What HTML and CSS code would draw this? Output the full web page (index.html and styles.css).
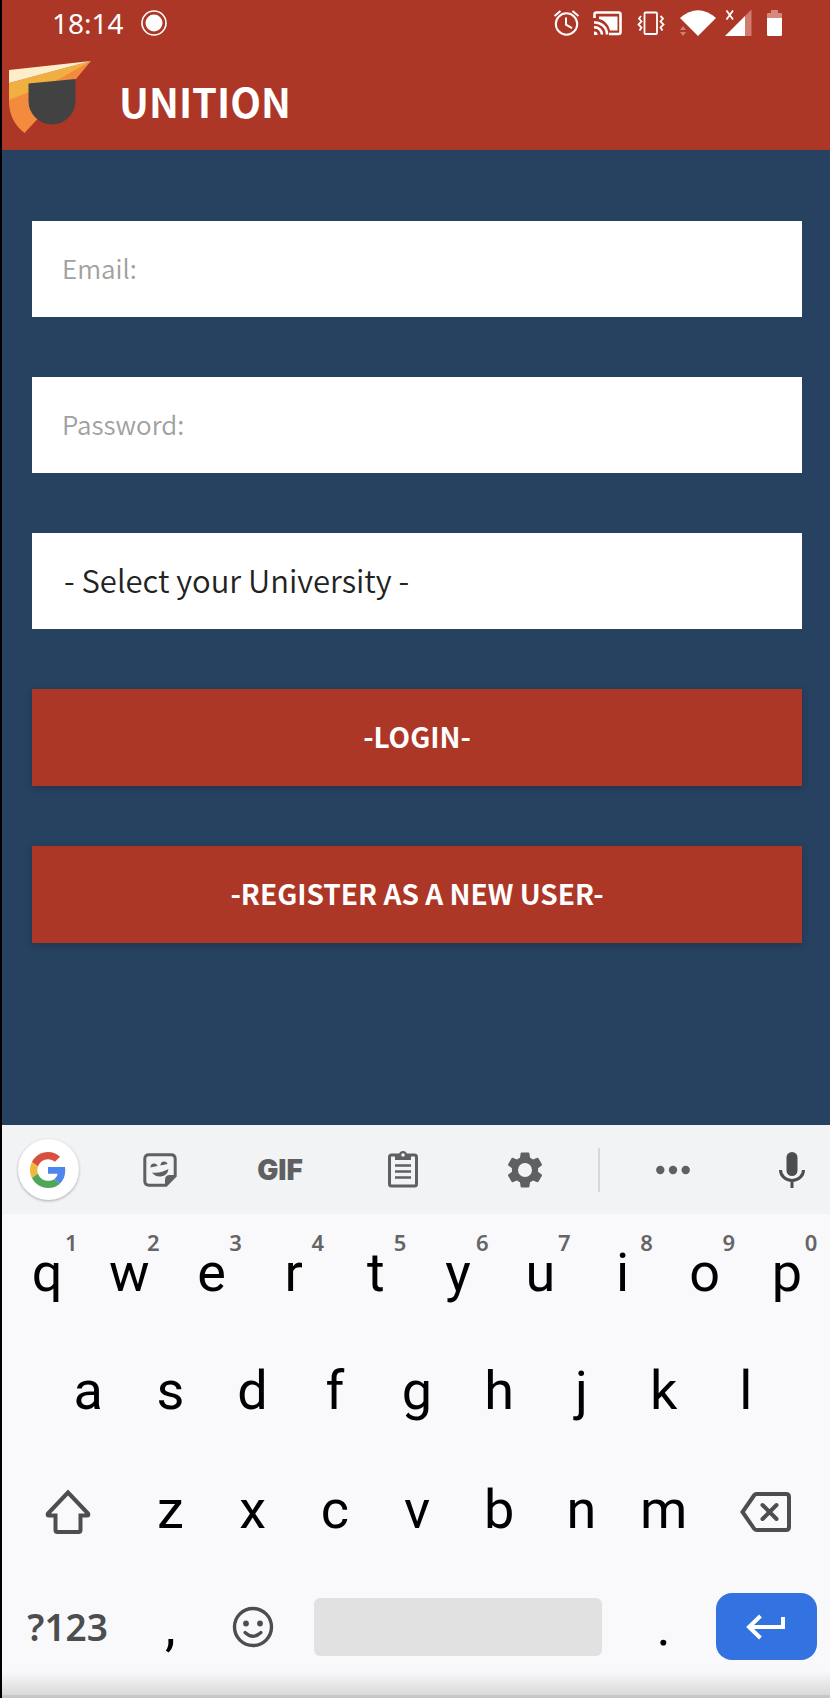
FILE: index.html
```html
<!DOCTYPE html>
<html lang="en">
<head>
<meta charset="utf-8">
<meta name="viewport" content="width=device-width, initial-scale=1">
<title>Unition</title>
<link rel="stylesheet" href="styles.css">
</head>
<body>
<header class="header">
  <div class="status">
    <div class="status-left">
      <time class="clock">18:14</time>
      <svg width="28" height="28" viewBox="0 0 28 28"><circle cx="14" cy="14" r="12" fill="none" stroke="#fff" stroke-width="1.6"/><circle cx="14" cy="14" r="8.5" fill="#fff"/></svg>
    </div>
    <svg class="status-icons" width="230" height="28" viewBox="553 9 230 28" fill="none" stroke="#fff">
      <g stroke-width="2"><circle cx="566.5" cy="24" r="10.7"/><path d="M566 17.500v7.200l6 3.500M554.500 16l6-5M572.500 11l6 5"/></g>
      <g stroke-width="2.600"><path d="M594.500 18v-3.500q0-2 2-2h22q2 0 2 2v17.500q0 2-2 2H609"/><path d="M594 22.500a12 12 0 0 1 13 12M594 27.500a7 7 0 0 1 8 7"/></g>
      <path d="M594 31.500a3 3 0 0 1 3.500 3.500H594zM599 16.500h18.500V30.500H610C608.500 24 604 20 599 19z" fill="#fff" stroke="none"/>
      <rect x="644.500" y="12.500" width="12.500" height="21.500" rx="1" stroke-width="1.800"/>
      <path d="M641 16l-2 2.500 2.500 3-3 3 3 3-2 3M660.500 16l2.500 2.500-2.500 3 3 3-3 3 2 3" stroke-width="1.800"/>
      <path d="M680 18q18-15.500 36 0L698 36z" fill="#fff" stroke="none"/>
      <path d="M680 30h6l-3-4zM680 32h6l-3 4z" fill="#cf8075" stroke="none"/>
      <path d="M725 36l20-20v20z" fill="#fff" stroke="none"/><path d="M745 16l6.500-6.500V36H745z" fill="#d07d70" stroke="none"/>
      <path d="M726.500 10.500l6.500 9M733 10.500l-6.500 9" stroke-width="1.800"/>
      <path d="M767 18v-4q0-1 1-1h3v-3h7v3h3q1 0 1 1v4z" fill="#d58a7e" stroke="none"/><path d="M767 18h15v16.500q0 1.500-1.500 1.500h-12q-1.500 0-1.500-1.500z" fill="#fff" stroke="none"/>
    </svg>
  </div>
  <div class="brand">
    <svg width="84" height="74" viewBox="8 60 84 74"><path d="M9 98L91 61 76 79 37 119.500 24.500 133Q9 121 9 101z" fill="#f28b3d"/><path d="M9 83L91 61 52 83 9 100z" fill="#f0b041"/><path d="M9 70L91 61 9 83z" fill="#fdedc9"/><path d="M28.500 83.500L75.500 79v22a23.500 23.500 0 0 1-47 0z" fill="#424242"/></svg>
    <h1 class="title">UNITION</h1>
  </div>
</header>

<main class="main">
  <form class="form">
    <input class="field" type="email" aria-label="Email" placeholder="Email:">
    <input class="field" type="password" aria-label="Password" placeholder="Password:">
    <select class="field select" aria-label="University"><option>- Select your University -</option></select>
    <button class="action" type="button">-LOGIN-</button>
    <button class="action" type="button">-REGISTER AS A NEW USER-</button>
  </form>
</main>

<section class="keyboard" aria-label="Keyboard">
  <div class="toolbar">
    <button class="tool" aria-label="Google"><span class="google"><svg width="36" height="36" viewBox="0 0 48 48"><path fill="#d94f3d" d="M24 9.500c3.540 0 6.710 1.220 9.210 3.600l6.850-6.850C35.900 2.380 30.470 0 24 0 14.620 0 6.510 5.380 2.560 13.220l7.980 6.190C12.430 13.720 17.740 9.500 24 9.500z"/><path fill="#4e86ec" d="M46.980 24.550c0-1.570-.15-3.090-.38-4.550H24v9.020h12.940c-.58 2.960-2.260 5.480-4.780 7.180l7.730 6c4.510-4.180 7.090-10.360 7.090-17.650z"/><path fill="#efb73e" d="M10.530 28.590c-.48-1.450-.76-2.990-.76-4.590s.27-3.140.76-4.590l-7.980-6.190C.92 16.460 0 20.120 0 24s.92 7.540 2.560 10.780l7.970-6.190z"/><path fill="#50a558" d="M24 48c6.480 0 11.930-2.130 15.890-5.810l-7.730-6c-2.150 1.450-4.920 2.300-8.160 2.300-6.260 0-11.570-4.220-13.470-9.910l-7.980 6.190C6.510 42.620 14.620 48 24 48z"/></svg></span></button>
    <button class="tool" aria-label="Stickers"><svg width="34" height="34" viewBox="0 0 34 34"><path d="M6 1.800h22q4.200 0 4.200 4.200v17L23 32.200H6q-4.200 0-4.200-4.200V6Q1.800 1.800 6 1.800z" fill="none" stroke="#5f6062" stroke-width="3"/><path d="M32.500 22L22 32.500V27q0-5 5-5zM9 19.500q9 1 16.500-3.500-1 7-7.500 7.500-6 .5-9-4z" fill="#5f6062"/><path d="M7.500 14.500q0-4 3.500-4 3 0 3.500 2.500zM17.500 12.500q0-4 3.500-4 3 0 3.500 2.500z" fill="#5f6062"/></svg></button>
    <button class="tool gif">GIF</button>
    <button class="tool" aria-label="Clipboard"><svg width="32" height="40" viewBox="0 0 32 40"><rect x="2.500" y="5" width="27" height="31" rx="2" fill="none" stroke="#5f6062" stroke-width="3"/><path d="M8 10V5q0-1 1-1h3a4.200 4.200 0 0 1 8 0h3q1 0 1 1v5z" fill="#5f6062"/><circle cx="16" cy="5" r="1.800" fill="#f1f3f4"/><path d="M8 15.500h16M8 21.500h16M8 27.500h16" stroke="#5f6062" stroke-width="2.600"/></svg></button>
    <button class="tool" aria-label="Settings"><svg width="42" height="42" viewBox="0 0 24 24"><path fill="#5f6062" d="M19.430 12.980c.04-.32.070-.64.070-.98s-.03-.66-.07-.98l2.110-1.650c.19-.15.240-.42.120-.64l-2-3.460c-.12-.22-.39-.3-.61-.22l-2.490 1c-.52-.4-1.080-.73-1.690-.98l-.38-2.650C14.460 2.180 14.250 2 14 2h-4c-.25 0-.46.180-.49.420l-.38 2.650c-.61.250-1.170.59-1.690.98l-2.490-1c-.23-.09-.49 0-.61.220l-2 3.460c-.13.220-.07.490.12.640l2.110 1.650c-.04.320-.07.650-.07.980s.03.660.07.980l-2.110 1.650c-.19.150-.24.420-.12.640l2 3.460c.12.220.39.300.61.220l2.490-1c.52.400 1.080.730 1.690.980l.38 2.650c.03.240.24.420.49.420h4c.25 0 .46-.18.49-.42l.38-2.650c.61-.25 1.170-.59 1.690-.98l2.490 1c.23.090.49 0 .61-.22l2-3.460c.12-.22.070-.49-.12-.64l-2.110-1.650zM12 16a4 4 0 1 1 0-8 4 4 0 0 1 0 8z"/></svg></button>
    <span class="divider"></span>
    <button class="tool" aria-label="More"><svg width="36" height="10" viewBox="0 0 36 10" fill="#5f6062"><circle cx="5.300" cy="5" r="4.200"/><circle cx="18" cy="5" r="4.200"/><circle cx="30.700" cy="5" r="4.200"/></svg></button>
    <button class="tool mic" aria-label="Voice input"><svg width="28" height="38" viewBox="0 0 28 38"><rect x="8.500" y="1" width="11" height="24" rx="5.500" fill="#4c4d4f"/><path d="M2.500 19a11.500 10.500 0 0 0 23 0M14 29.500V37" fill="none" stroke="#4c4d4f" stroke-width="3"/></svg></button>
  </div>
  <div class="keys">
    <div class="row row-top">
      <button class="key">q<span class="hint">1</span></button>
      <button class="key">w<span class="hint">2</span></button>
      <button class="key">e<span class="hint">3</span></button>
      <button class="key">r<span class="hint">4</span></button>
      <button class="key">t<span class="hint">5</span></button>
      <button class="key">y<span class="hint">6</span></button>
      <button class="key">u<span class="hint">7</span></button>
      <button class="key">i<span class="hint">8</span></button>
      <button class="key">o<span class="hint">9</span></button>
      <button class="key">p<span class="hint">0</span></button>
    </div>
    <div class="row row-home">
      <button class="key">a</button>
      <button class="key">s</button>
      <button class="key">d</button>
      <button class="key">f</button>
      <button class="key">g</button>
      <button class="key">h</button>
      <button class="key">j</button>
      <button class="key">k</button>
      <button class="key">l</button>
    </div>
    <div class="row row-lower">
      <button class="key key-icon" aria-label="Shift"><svg width="48" height="46" viewBox="0 0 48 46"><path d="M24 3.500L44 24.500q1 2-1 2h-6.500V41q0 2-2 2h-21q-2 0-2-2V26.500H5q-2 0-1-2z" fill="none" stroke="#4c4d4f" stroke-width="4"/></svg></button>
      <button class="key">z</button>
      <button class="key">x</button>
      <button class="key">c</button>
      <button class="key">v</button>
      <button class="key">b</button>
      <button class="key">n</button>
      <button class="key">m</button>
      <button class="key key-icon" aria-label="Backspace"><svg width="52" height="42" viewBox="0 0 52 42"><path d="M16.500 3H46q3 0 3 3v30q0 3-3 3H16.500q-1.500 0-2.500-1.500L2.500 21 14 4.500Q15 3 16.500 3z" fill="none" stroke="#4c4d4f" stroke-width="4"/><path d="M22.500 14l14 14M36.500 14l-14 14" stroke="#4c4d4f" stroke-width="4" stroke-linecap="round"/></svg></button>
    </div>
    <div class="row row-bottom">
      <button class="key symbols">?123</button>
      <button class="key">,</button>
      <button class="key" aria-label="Emoji"><svg width="42" height="42" viewBox="0 0 42 42"><circle cx="21" cy="21" r="18.500" fill="none" stroke="#4c4d4f" stroke-width="3.400"/><circle cx="14" cy="17.500" r="2.900" fill="#4c4d4f"/><circle cx="28" cy="17.500" r="2.900" fill="#4c4d4f"/><path d="M13 26.500q8 7.500 16 0" fill="none" stroke="#4c4d4f" stroke-width="3.200" stroke-linecap="round"/></svg></button>
      <button class="key space" aria-label="Space"></button>
      <button class="key">.</button>
      <button class="key enter" aria-label="Enter"><svg width="40" height="26" viewBox="0 0 40 26"><path d="M14.500 2L3 13l11.500 11M3 13h34V3" fill="none" stroke="#fff" stroke-width="4"/></svg></button>
    </div>
  </div>
</section>
</body>
</html>
```
FILE: styles.css
```css
* { box-sizing: border-box; }

body {
  margin: 0;
  min-height: 100vh;
  display: flex;
  flex-direction: column;
  border-left: 2px solid #000;
  background: #264260;
  font-family: "Noto Sans CJK SC", "Noto Sans", sans-serif;
}

button, input, select {
  margin: 0;
  border: 0;
  border-radius: 0;
  font: inherit;
}

button { padding: 0; background: none; }

svg { display: block; flex: none; }

.header {
  height: 150px;
  background: #ad3727;
  color: #fff;
}

.status {
  height: 46px;
  padding: 0 47px 0 50px;
  display: flex;
  align-items: center;
  justify-content: space-between;
}

.status-left { display: flex; align-items: center; gap: 16px; }

.clock {
  font-family: "Noto Sans", sans-serif;
  font-size: 28px;
  line-height: 46px;
}

.brand {
  height: 102px;
  padding-left: 6px;
  display: flex;
  align-items: center;
  gap: 27px;
}

.title {
  margin: 0;
  padding-top: 8px;
  font-size: 40px;
  line-height: 48px;
  font-weight: 700;
}

.main { flex: 1; padding: 71px 28px 71px 30px; }

.form { display: flex; flex-direction: column; gap: 60px; }

.field {
  width: 100%;
  height: 96px;
  padding: 0 30px 4px;
  background: #fff;
  color: #222;
  font-size: 26px;
  font-weight: 350;
}

.field::placeholder { color: #a0a0a0; opacity: 1; }

.select {
  appearance: none;
  padding: 0 32px 4px;
  font-size: 31px;
}

.action {
  height: 97px;
  padding-bottom: 3px;
  background: #ad3727;
  color: #fff;
  font-size: 28px;
  font-weight: 700;
  box-shadow: 0 2px 6px rgba(30, 30, 50, 0.4);
}

.keyboard {
  padding-bottom: 11px;
  border-bottom: 3px solid #c6c6c6;
  background: linear-gradient(to top, #d9d9d9, #f9f9fb 24px);
}

.toolbar {
  height: 89px;
  display: grid;
  grid-template-columns: 92fr 132fr 108fr 138fr 106fr 42fr 106fr 104fr;
  align-items: center;
  background: #f1f3f4;
}

.tool {
  height: 89px;
  display: flex;
  align-items: center;
  justify-content: center;
  color: #5f6062;
}

.google {
  width: 61px;
  height: 61px;
  display: flex;
  align-items: center;
  justify-content: center;
  border-radius: 50%;
  background: #fff;
  box-shadow: 0 1px 3px rgba(0, 0, 0, 0.3);
}

.gif { font-family: Inter, sans-serif; font-size: 28px; font-weight: 900; }

.divider {
  justify-self: center;
  width: 2px;
  height: 44px;
  background: #d8d9db;
}

.mic { justify-content: flex-end; padding-right: 24px; }

.keys { padding: 0 2px 0 4px; }

.row { height: 119px; display: grid; }

.row-top { height: 117px; grid-template-columns: repeat(10, 1fr); }

.row-home { padding: 0 41px; grid-template-columns: repeat(9, 1fr); }

.row-lower { grid-template-columns: 3fr repeat(7, 2fr) 3fr; }

.row-bottom {
  height: 115px;
  grid-template-columns: 3fr 2fr 2fr 8fr 2fr 3fr;
  align-items: center;
}

.key {
  position: relative;
  display: flex;
  align-items: center;
  justify-content: center;
  color: #000;
  font-family: Roboto, sans-serif;
  font-size: 54px;
  line-height: 64px;
}

.key-icon { padding-top: 5px; }

.hint {
  position: absolute;
  top: 14px;
  right: 0;
  width: 34px;
  color: #646567;
  font-family: "Noto Sans", sans-serif;
  font-size: 22px;
  line-height: 28px;
  font-weight: 600;
  text-align: center;
}

.symbols {
  color: #4c4d4f;
  font-family: "Noto Sans", sans-serif;
  font-size: 37px;
  font-weight: 600;
}

.space {
  height: 58px;
  margin: 0 20px;
  border-radius: 6px;
  background: #e1e1e1;
}

.enter {
  height: 67px;
  margin: 0 11px;
  border-radius: 16px;
  background: #3373e1;
}
```
